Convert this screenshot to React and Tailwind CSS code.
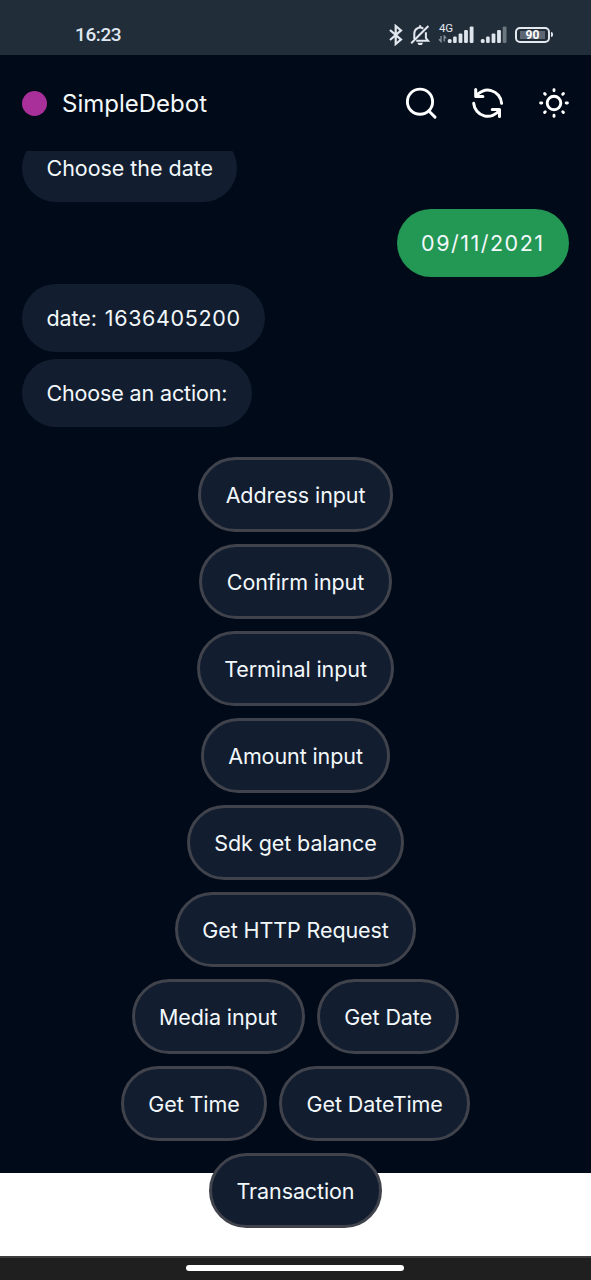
const messages = [
  { text: "Choose the date", tracking: "tracking-[-0.04px]" },
  { value: "09/11/2021", tracking: "tracking-[1.5px]", own: true },
  { text: "date: ", value: "1636405200", tracking: "ml-[2px] tracking-[0.65px]" },
  { text: "Choose an action:", tracking: "tracking-[-0.15px]" },
];

const actions = [
  ["Address input"],
  ["Confirm input"],
  ["Terminal input"],
  ["Amount input"],
  ["Sdk get balance"],
  ["Get HTTP Request"],
  ["Media input", "Get Date"],
  ["Get Time", "Get DateTime"],
  ["Transaction"],
];

function SignalBars({ dimLast }) {
  return (
    <svg width="27" height="18" viewBox="0 0 27 18" fill="#dfe5ec">
      <rect x="0.8" y="13" width="3.8" height="4" rx="1.5" />
      <rect x="6.1" y="10.6" width="3.6" height="6.4" rx="1.2" />
      <rect x="11.6" y="7.4" width="3.8" height="9.6" rx="1.2" />
      <rect x="17.1" y="4" width="3.8" height="13" rx="1.2" />
      <rect x="22.7" y="0.4" width="3.8" height="16.6" rx="1.2" opacity={dimLast ? 0.4 : 1} />
    </svg>
  );
}

function StatusBar() {
  return (
    <div className="h-[55px] shrink-0 flex items-center justify-between bg-[#222d3a] pl-[75px] pr-[39px] pt-[14px]">
      <span className="font-['Roboto'] font-medium text-[19px] leading-none tracking-[-0.4px] text-[#dfe7f0]">
        16:23
      </span>

      <div className="flex items-center">
        {/* bluetooth */}
        <svg width="16" height="22" viewBox="0 0 16 22" fill="none" stroke="#e3e8ee" strokeWidth="2.2">
          <path d="M2 6l11 9.6L7.7 20V2L13 6.4 2 16" />
        </svg>
        {/* muted bell */}
        <svg className="ml-[6px]" width="21" height="22" viewBox="0 0 21 22" fill="none" stroke="#e3e8ee" strokeWidth="2">
          <path d="M4.3 15V9.5a5.8 5.8 0 0 1 9-4.9M15.9 8.2V14l2.2 2.8H6.2" />
          <path d="M1.2 19.2L18.4 2" />
          <path d="M7.3 18.8h5.8l-1.3 2.2H8.6z" fill="#e3e8ee" stroke="none" />
          <path d="M10.1 3.4V1.2" />
        </svg>
        <div className="relative ml-[16px] flex">
          <span className="absolute left-[-8px] top-[-3px] font-['Roboto'] text-[11.5px] leading-none tracking-[-0.3px] text-[#e3e8ee]">
            4G
          </span>
          <svg className="absolute left-[-9px] top-[9px]" width="9" height="8" viewBox="0 0 9 8" fill="none" stroke="#8a949f" strokeWidth="1.3">
            <path d="M1 4.2l2 2.3V1M8.2 3.4L6.2 1v5.6" />
          </svg>
          <SignalBars />
        </div>
        <div className="ml-[6px] flex">
          <SignalBars dimLast />
        </div>
        {/* battery */}
        <div className="ml-[8px] -mr-px flex items-center">
          <div className="flex h-4 w-[35px] items-center justify-center rounded-[5px] border-2 border-[#e3e8ee] p-[2px]">
            <span className="flex h-full w-[25px] items-center justify-center bg-[#5d6773] font-['Roboto'] text-[12px] font-bold leading-none text-white">
              90
            </span>
          </div>
          <span className="ml-px h-[5px] w-[2px] rounded-r-sm bg-[#e3e8ee]" />
        </div>
      </div>
    </div>
  );
}

function Header() {
  return (
    <header className="flex h-24 shrink-0 items-center pl-[22px] pr-[21px]">
      <span className="size-[25px] rounded-full bg-[#a9309b]" />
      <h1 className="ml-[15px] pt-px text-[24px] leading-none">SimpleDebot</h1>

      <div className="ml-auto flex items-center gap-[34px] text-white">
        <button aria-label="Search">
          <svg width="32" height="32" viewBox="0 0 32 32" fill="none" stroke="currentColor" strokeWidth="2.9" strokeLinecap="round">
            <circle cx="14" cy="14.7" r="12.6" />
            <path d="M23.4 24.5l5.6 5.6" />
          </svg>
        </button>
        <button aria-label="Reload">
          <svg width="32" height="32" viewBox="0 0 32 32" fill="none" stroke="currentColor" strokeWidth="3" strokeLinecap="round" strokeLinejoin="round">
            <path d="M29.6 16.3A14.1 14.1 0 0 0 3.8 9.4M3.7 2.6v7h7.2" />
            <path d="M1.7 16.3a14.1 14.1 0 0 0 25.8 6.7M20.2 22.6h7.3v6.8" />
          </svg>
        </button>
        <button aria-label="Theme">
          <svg width="32" height="32" viewBox="-16 -16 32 32" fill="none" stroke="currentColor" strokeWidth="2.9" strokeLinecap="round">
            <circle r="6.8" />
            <path d="M0-12.2v-1.2M0 12.2v1.2M-12.2 0h-1.2M12.2 0h1.2M-8.7-8.7l-.7-.7M8.7-8.7l.7-.7M-8.7 8.7l-.7.7M8.7 8.7l.7.7" />
          </svg>
        </button>
      </div>
    </header>
  );
}

function Message({ text, value, tracking, own }) {
  return (
    <div
      className={`flex h-[68.5px] items-center rounded-full px-[24.5px] ${
        own ? "self-end bg-[#239754]" : "bg-[#121e30]"
      }`}
    >
      <p className={value ? "" : tracking}>
        {text}
        {value && <span className={tracking}>{value}</span>}
      </p>
    </div>
  );
}

export default function App() {
  return (
    <div className="flex h-[1280px] w-[591px] flex-col overflow-hidden bg-white font-['Inter',sans-serif] text-[#f3f8fb]">
      <StatusBar />

      <main className="h-[1118px] shrink-0 bg-[#010a18]">
        <Header />

        {/* scrolled chat, runs past the dark background */}
        <div className="h-[1105px] overflow-hidden px-[22px] text-[21.5px] tracking-[-0.1px] whitespace-nowrap">
          <div className="-mt-[17.5px] flex flex-col items-start gap-[6.5px]">
            {messages.map((m, i) => (
              <Message key={i} {...m} />
            ))}
          </div>

          <div className="mt-[30px] flex flex-col gap-3">
            {actions.map((row) => (
              <div key={row[0]} className="flex justify-center gap-3">
                {row.map((label) => (
                  <button
                    key={label}
                    className="h-[75px] rounded-full border-3 border-[#40434c] bg-[#121e30] px-[24.5px] pt-[2px]"
                  >
                    {label}
                  </button>
                ))}
              </div>
            ))}
          </div>
        </div>
      </main>

      {/* system navigation */}
      <div className="mt-auto flex h-6 shrink-0 justify-center border-t-2 border-[#3c3c3c] bg-[#1f1f1f] pt-[7px] pr-px">
        <span className="h-[6px] w-[218px] rounded-full bg-white" />
      </div>
    </div>
  );
}
